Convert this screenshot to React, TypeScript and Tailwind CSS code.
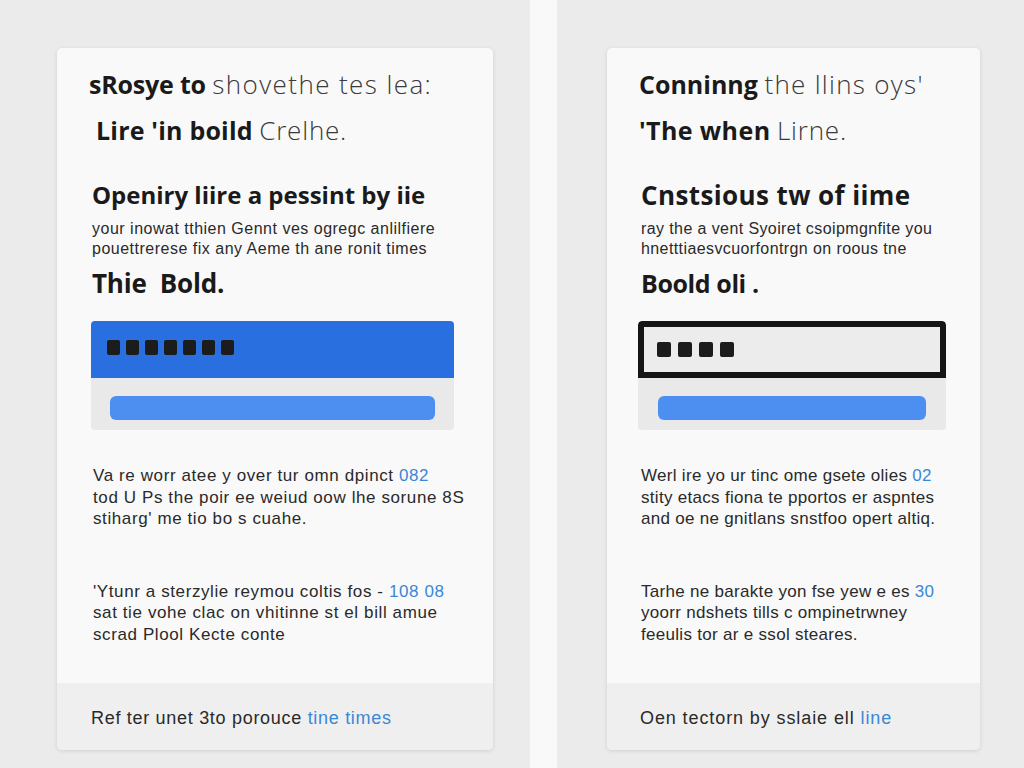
import React from "react";

const head = { fontFamily: '"Open Sans", "Noto Sans", sans-serif' };
const body = { fontFamily: '"Liberation Sans", Arial, sans-serif' };

function Squares({ n, w, gap }: { n: number; w: string; gap: string }) {
  return (
    <div className={"flex " + gap}>
      {Array.from({ length: n }).map((_, i) => (
        <div key={i} className={w + " h-[15px] bg-[#1c1c1c] rounded-[2px]"} />
      ))}
    </div>
  );
}

export default function App() {
  return (
    <div className="w-[1024px] h-[768px] flex bg-[#ebebeb] overflow-hidden">
      {/* left pane */}
      <div className="w-[530px] h-full pt-[48px] pl-[57px]">
        <div className="w-[436px] h-[702px] bg-[#f9f9f9] rounded-[5px] shadow-[0_1px_4px_rgba(0,0,0,0.12)] flex flex-col overflow-hidden">
          <div className="pl-[32px] pr-[20px] pt-[13px]">
            <div style={head} className="text-[25px] leading-[46px] text-[#3a3a3a] whitespace-nowrap">
              <span className="font-bold text-[#1a1a1a] tracking-[-0.2px]">sRosye to</span>{" "}
              <span className="text-[26px] font-light tracking-[1.4px]">shovethe tes lea:</span>
            </div>
            <div style={head} className="text-[25px] leading-[46px] text-[#3a3a3a] whitespace-nowrap pl-[7px]">
              <span className="font-bold text-[#1a1a1a] tracking-[0.2px]">Lire 'in boild</span>{" "}
              <span className="text-[26px] font-light tracking-[0.8px]">Crelhe.</span>
            </div>
            <div style={head} className="mt-[27px] text-[24px] leading-[30px] font-bold tracking-[0px] text-[#1a1a1a] whitespace-nowrap pl-[3px]">
              Openiry liire a pessint by iie
            </div>
            <div style={body} className="mt-[9px] text-[16px] leading-[20px] tracking-[0.5px] text-[#2a2a2a] pl-[3px]">
              <div className="whitespace-nowrap">your inowat tthien Gennt ves ogregc anlilfiere</div>
              <div className="whitespace-nowrap">pouettrerese fix any Aeme th ane ronit times</div>
            </div>
            <div style={head} className="mt-[9px] text-[26px] leading-[30px] font-bold tracking-[-0.2px] text-[#1a1a1a] pl-[3px] whitespace-pre">
              Thie  Bold.
            </div>
          </div>
          <div className="ml-[34px] w-[363px] mt-[23px] rounded-[4px] overflow-hidden">
            <div className="h-[57px] bg-[#2a6fdf] flex items-center pl-[16px] pb-[4px]">
              <Squares n={7} w="w-[13px]" gap="gap-[6px]" />
            </div>
            <div className="h-[52px] bg-[#e9e9e9] px-[19px] pt-[18px]">
              <div className="h-[24px] rounded-[6px] bg-[#4d8ff0]" />
            </div>
          </div>
          <div style={body} className="pl-[36px] mt-[35px] text-[17px] leading-[21.5px] tracking-[0.6px] text-[#2a2a2a]">
            <div className="whitespace-nowrap">Va re worr atee y over tur omn dpinct <span className="text-[#3a87d8]">082</span></div>
            <div className="whitespace-nowrap">tod U Ps the poir ee weiud oow lhe sorune 8S</div>
            <div className="whitespace-nowrap">stiharg' me tio bo s cuahe.</div>
          </div>
          <div style={body} className="pl-[36px] mt-[51px] text-[17px] leading-[21.5px] tracking-[0.6px] text-[#2a2a2a]">
            <div className="whitespace-nowrap">'Ytunr a sterzylie reymou coltis fos - <span className="text-[#3a87d8]">108 08</span></div>
            <div className="whitespace-nowrap">sat tie vohe clac on vhitinne st el bill amue</div>
            <div className="whitespace-nowrap">scrad Plool Kecte conte</div>
          </div>
          <div className="mt-auto h-[67px] bg-[#efefef] flex items-center pl-[34px] pt-[4px]">
            <div style={body} className="text-[18px] tracking-[0.7px] text-[#2a2a2a] whitespace-nowrap">
              Ref ter unet 3to porouce <span className="text-[#3a87d8]">tine times</span>
            </div>
          </div>
        </div>
      </div>

      {/* divider strip */}
      <div className="w-[27px] h-full bg-[#f9f9f9]" />

      {/* right pane */}
      <div className="flex-1 h-full pt-[48px] pl-[50px]">
        <div className="w-[373px] h-[702px] bg-[#f9f9f9] rounded-[5px] shadow-[0_1px_4px_rgba(0,0,0,0.12)] flex flex-col overflow-hidden">
          <div className="pl-[32px] pr-[10px] pt-[13px]">
            <div style={head} className="text-[25px] leading-[46px] text-[#3a3a3a] whitespace-nowrap">
              <span className="font-bold text-[#1a1a1a] tracking-[0px]">Conninng</span>{" "}
              <span className="text-[26px] font-light tracking-[1.3px]">the llins oys'</span>
            </div>
            <div style={head} className="text-[25px] leading-[46px] text-[#3a3a3a] whitespace-nowrap">
              <span className="font-bold text-[#1a1a1a] tracking-[0.4px]">'The when</span>{" "}
              <span className="text-[26px] font-light tracking-[0.8px]">Lirne.</span>
            </div>
            <div style={head} className="mt-[27px] text-[26px] leading-[30px] font-bold tracking-[0.4px] text-[#1a1a1a] whitespace-nowrap pl-[2px]">
              Cnstsious tw of iime
            </div>
            <div style={body} className="mt-[9px] text-[16px] leading-[20px] tracking-[0.4px] text-[#2a2a2a] pl-[2px]">
              <div className="whitespace-nowrap">ray the a vent Syoiret csoipmgnfite you</div>
              <div className="whitespace-nowrap">hnetttiaesvcuorfontrgn on roous tne</div>
            </div>
            <div style={head} className="mt-[9px] text-[25px] leading-[30px] font-bold tracking-[-0.4px] text-[#1a1a1a] pl-[2px]">
              Boold oli .
            </div>
          </div>
          <div className="ml-[31px] w-[308px] mt-[23px] rounded-[4px] overflow-hidden">
            <div className="h-[57px] bg-[#ececec] border-[6px] border-[#151515] rounded-t-[4px] flex items-center pl-[13px]">
              <Squares n={4} w="w-[14px]" gap="gap-[7px]" />
            </div>
            <div className="h-[52px] bg-[#e9e9e9] px-[20px] pt-[18px]">
              <div className="h-[24px] rounded-[6px] bg-[#4d8ff0]" />
            </div>
          </div>
          <div style={body} className="pl-[34px] mt-[35px] text-[17px] leading-[21.5px] tracking-[0.3px] text-[#2a2a2a]">
            <div className="whitespace-nowrap">Werl ire yo ur tinc ome gsete olies <span className="text-[#3a87d8]">02</span></div>
            <div className="whitespace-nowrap">stity etacs fiona te pportos er aspntes</div>
            <div className="whitespace-nowrap">and oe ne gnitlans snstfoo opert altiq.</div>
          </div>
          <div style={body} className="pl-[34px] mt-[51px] text-[17px] leading-[21.5px] tracking-[0.3px] text-[#2a2a2a]">
            <div className="whitespace-nowrap">Tarhe ne barakte yon fse yew e es <span className="text-[#3a87d8]">30</span></div>
            <div className="whitespace-nowrap">yoorr ndshets tills c ompinetrwney</div>
            <div className="whitespace-nowrap">feeulis tor ar e ssol steares.</div>
          </div>
          <div className="mt-auto h-[67px] bg-[#efefef] flex items-center pl-[33px] pt-[4px]">
            <div style={body} className="text-[18px] tracking-[0.9px] text-[#2a2a2a] whitespace-nowrap">
              Oen tectorn by sslaie ell <span className="text-[#3a87d8]">line</span>
            </div>
          </div>
        </div>
      </div>
    </div>
  );
}
